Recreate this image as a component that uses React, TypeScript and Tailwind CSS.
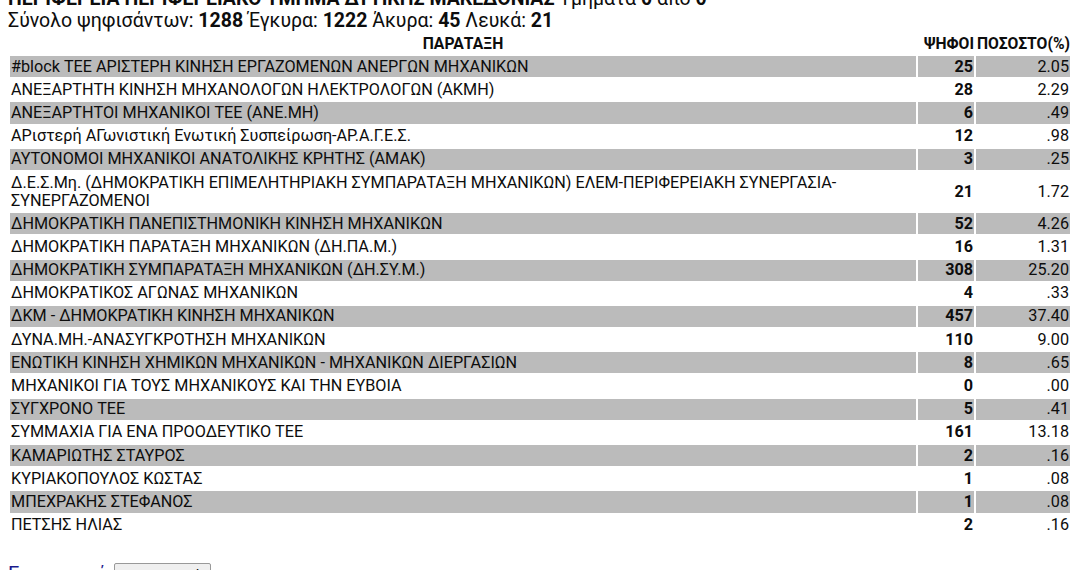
import React from "react";

const rows: [string, string, string][] = [
  ["#block ΤΕΕ ΑΡΙΣΤΕΡΗ ΚΙΝΗΣΗ ΕΡΓΑΖΟΜΕΝΩΝ ΑΝΕΡΓΩΝ ΜΗΧΑΝΙΚΩΝ", "25", "2.05"],
  ["ΑΝΕΞΑΡΤΗΤΗ ΚΙΝΗΣΗ ΜΗΧΑΝΟΛΟΓΩΝ ΗΛΕΚΤΡΟΛΟΓΩΝ (ΑΚΜΗ)", "28", "2.29"],
  ["ΑΝΕΞΑΡΤΗΤΟΙ ΜΗΧΑΝΙΚΟΙ ΤΕΕ (ΑΝΕ.ΜΗ)", "6", ".49"],
  ["ΑΡιστερή ΑΓωνιστική Ενωτική Συσπείρωση-ΑΡ.Α.Γ.Ε.Σ.", "12", ".98"],
  ["ΑΥΤΟΝΟΜΟΙ ΜΗΧΑΝΙΚΟΙ ΑΝΑΤΟΛΙΚΗΣ ΚΡΗΤΗΣ (ΑΜΑΚ)", "3", ".25"],
  ["Δ.Ε.Σ.Μη. (ΔΗΜΟΚΡΑΤΙΚΗ ΕΠΙΜΕΛΗΤΗΡΙΑΚΗ ΣΥΜΠΑΡΑΤΑΞΗ ΜΗΧΑΝΙΚΩΝ) ΕΛΕΜ-ΠΕΡΙΦΕΡΕΙΑΚΗ ΣΥΝΕΡΓΑΣΙΑ-ΣΥΝΕΡΓΑΖΟΜΕΝΟΙ", "21", "1.72"],
  ["ΔΗΜΟΚΡΑΤΙΚΗ ΠΑΝΕΠΙΣΤΗΜΟΝΙΚΗ ΚΙΝΗΣΗ ΜΗΧΑΝΙΚΩΝ", "52", "4.26"],
  ["ΔΗΜΟΚΡΑΤΙΚΗ ΠΑΡΑΤΑΞΗ ΜΗΧΑΝΙΚΩΝ (ΔΗ.ΠΑ.Μ.)", "16", "1.31"],
  ["ΔΗΜΟΚΡΑΤΙΚΗ ΣΥΜΠΑΡΑΤΑΞΗ ΜΗΧΑΝΙΚΩΝ (ΔΗ.ΣΥ.Μ.)", "308", "25.20"],
  ["ΔΗΜΟΚΡΑΤΙΚΟΣ ΑΓΩΝΑΣ ΜΗΧΑΝΙΚΩΝ", "4", ".33"],
  ["ΔΚΜ - ΔΗΜΟΚΡΑΤΙΚΗ ΚΙΝΗΣΗ ΜΗΧΑΝΙΚΩΝ", "457", "37.40"],
  ["ΔΥΝΑ.ΜΗ.-ΑΝΑΣΥΓΚΡΟΤΗΣΗ ΜΗΧΑΝΙΚΩΝ", "110", "9.00"],
  ["ΕΝΩΤΙΚΗ ΚΙΝΗΣΗ ΧΗΜΙΚΩΝ ΜΗΧΑΝΙΚΩΝ - ΜΗΧΑΝΙΚΩΝ ΔΙΕΡΓΑΣΙΩΝ", "8", ".65"],
  ["ΜΗΧΑΝΙΚΟΙ ΓΙΑ ΤΟΥΣ ΜΗΧΑΝΙΚΟΥΣ ΚΑΙ ΤΗΝ ΕΥΒΟΙΑ", "0", ".00"],
  ["ΣΥΓΧΡΟΝΟ ΤΕΕ", "5", ".41"],
  ["ΣΥΜΜΑΧΙΑ ΓΙΑ ΕΝΑ ΠΡΟΟΔΕΥΤΙΚΟ ΤΕΕ", "161", "13.18"],
  ["ΚΑΜΑΡΙΩΤΗΣ ΣΤΑΥΡΟΣ", "2", ".16"],
  ["ΚΥΡΙΑΚΟΠΟΥΛΟΣ ΚΩΣΤΑΣ", "1", ".08"],
  ["ΜΠΕΧΡΑΚΗΣ ΣΤΕΦΑΝΟΣ", "1", ".08"],
  ["ΠΕΤΣΗΣ ΗΛΙΑΣ", "2", ".16"],
];

export default function App() {
  return (
    <div className="bg-white text-[#0d0d0d] px-[8px] mt-[-12px] font-['Roboto',sans-serif] h-[582px] overflow-hidden">
      <div className="text-[19.5px] leading-[22px] whitespace-nowrap">
        <b>ΠΕΡΙΦΕΡΕΙΑ ΠΕΡΙΦΕΡΕΙΑΚΟ ΤΜΗΜΑ ΔΥΤΙΚΗΣ ΜΑΚΕΔΟΝΙΑΣ</b> Τμήματα <b>0</b> από <b>0</b>
      </div>
      <div className="text-[19.5px] leading-[21px] whitespace-nowrap">
        Σύνολο ψηφισάντων: <b>1288</b> Έγκυρα: <b>1222</b> Άκυρα: <b>45</b> Λευκά: <b>21</b>
      </div>
      <table className="w-[1064px] border-separate border-spacing-[2px] text-[16.2px] leading-[18px]">
        <thead>
          <tr className="text-[15.7px] font-bold">
            <th className="text-center py-[1px] pt-[2px]">ΠΑΡΑΤΑΞΗ</th>
            <th className="text-right py-[1px] pt-[2px] w-[56px]">ΨΗΦΟΙ</th>
            <th className="text-right py-[1px] pt-[2px] w-[94px]">ΠΟΣΟΣΤΟ(%)</th>
          </tr>
        </thead>
        <tbody>
          {rows.map(([n, v, p], i) => {
            const bg = i % 2 === 0 ? "bg-[#bbbbbb]" : "bg-white";
            return (
              <tr key={i}>
                <td className={`${bg} px-[1px] py-[1.6px]`}>{n}</td>
                <td className={`${bg} text-right font-bold px-[1px] py-[1.6px]`}>{v}</td>
                <td className={`${bg} text-right px-[1px] py-[1.6px]`}>{p}</td>
              </tr>
            );
          })}
        </tbody>
      </table>
      <div className="mt-[21px] flex items-center gap-[6px] text-[20px]">
        <a className="text-[#1a1a8c]">Επιστροφή</a>
        <button className="border border-[#999] bg-[#efefef] rounded-[2px] px-[9px] text-[15px] leading-[20px] font-['Open_Sans',sans-serif]">Επιστροφή</button>
      </div>
    </div>
  );
}
